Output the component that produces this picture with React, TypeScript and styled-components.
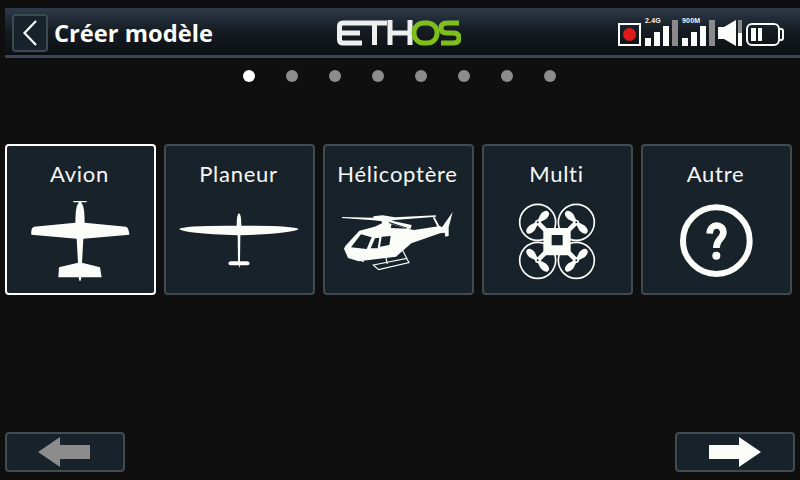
import React from "react";
import styled, { createGlobalStyle } from "styled-components";

const Global = createGlobalStyle`
  html, body { margin: 0; padding: 0; background: #0f0f0f; }
  #root { width: 800px; height: 480px; overflow: hidden; }
  * { box-sizing: border-box; }
`;

const Screen = styled.div`
  width: 800px; height: 480px; display: flex; flex-direction: column;
  background: #0f0f0f; color: #fff; font-family: Lato, "Open Sans", sans-serif;
`;
const Header = styled.header`
  margin: 8px 0 0 5px; height: 50px; display: flex; align-items: center; position: relative;
  padding: 0 16px 0 7px; border-bottom: 3px solid #39455a;
  background: linear-gradient(180deg, #303b4a 0%, #222c38 22%, #141b21 50%, #0c1013 100%);
`;
const BackButton = styled.div`
  width: 36px; height: 38px; margin-top: 3px; flex: none; display: flex; align-items: center; justify-content: center;
  background: #18222a; border: 2px solid #3d4a50; border-radius: 4px;
`;
const Title = styled.div`
  width: 289px; flex: none; padding-left: 6px; margin-top: 3px; font: 700 23.7px "Open Sans", sans-serif; white-space: nowrap; color: #fbfdfb;
`;
const Status = styled.div`
  margin-left: auto; display: flex; align-items: flex-end; height: 26px; margin-top: 2px;
`;
const RecBox = styled.div`
  width: 23px; height: 23px; border: 2px solid #fff; display: flex; align-items: center; justify-content: center;
  &::after { content: ""; width: 13px; height: 13px; border-radius: 50%; background: #e01a1a; }
`;
const Signal = styled.div`
  position: relative; width: 33px; height: 26px; margin-left: 4px; display: flex; align-items: flex-end; gap: 3px;
`;
const SignalLabel = styled.span`
  position: absolute; left: 0; top: -3px; font: 700 7px "Liberation Sans", sans-serif; color: #f4f4f4; letter-spacing: 0.2px;
`;
const Bar = styled.span<{ $h: number; $off?: boolean }>`
  width: 6px; height: ${p => p.$h}px; background: ${p => (p.$off ? "#8a8a8a" : "#fbfdfb")};
`;
const Dots = styled.div`
  display: flex; justify-content: center; gap: 31px; margin-top: 12px; padding-right: 1px;
`;
const Dot = styled.span<{ $on?: boolean }>`
  width: 12px; height: 12px; border-radius: 50%; background: ${p => (p.$on ? "#ffffff" : "#8c8c8c")};
`;
const Cards = styled.div`
  display: flex; gap: 8px; margin-top: 62px; padding-left: 5px;
`;
const Card = styled.div<{ $sel?: boolean }>`
  width: 151px; height: 151px; display: flex; flex-direction: column; align-items: center;
  background: #18222a; border: 2px solid ${p => (p.$sel ? "#ffffff" : "#3f4b4f")}; border-radius: 4px;
`;
const Label = styled.div`
  height: 46px; width: 100%; padding-top: 13px; padding-right: 2px; text-align: center; font-size: 22px; line-height: 30px; letter-spacing: 0.75px; color: #f6f8f6; white-space: nowrap;
`;
const Footer = styled.footer`
  margin-top: auto; padding: 0 5px 8px; display: flex; justify-content: space-between;
`;
const NavButton = styled.div`
  width: 120px; height: 40px; display: flex; align-items: center; justify-content: center;
  background: #18222a; border: 2px solid #3f4b4f; border-radius: 4px;
`;

const W = "#fbfdf9";
const BG = "#18222a";

const IconSvg = ({ x0, children }: { x0: number; children: React.ReactNode }) => (
  <svg width={147} height={99} viewBox={`${x0} 156 441 297`}>{children}</svg>
);

const Plane = () => (
  <IconSvg x0={21}>
    <path fill={W} d="M220 183H260V187H243L245 190Q254 200 254 248L378 260Q386 262 388 284L250 296 246 368 300 382 305 412 244 412 242 422H238L236 412 175 412 177 382 234 368 230 296 94 284Q92 264 102 260L226 248Q226 200 235 190L237 187H220Z" />
  </IconSvg>
);
const Glider = () => (
  <IconSvg x0={18}>
    <path fill={W} d="M237 220Q244 222 244 257Q400 256 416 267Q400 280 241 286L240 364H262Q269 365 269 370 269 376 262 376H240L238 384 236 376H212Q205 376 205 370 205 365 212 364H234L233 286Q70 280 57 267 70 256 230 257 230 222 237 220Z" />
  </IconSvg>
);
const Heli = () => (
  <IconSvg x0={15}>
    <g fill={W}>
      <path d="M66 231L160 233V229L188 226 225 232 348 226V230L225 240 200 245 160 241 66 234Z" />
      <path d="M184 238L206 240 275 255 272 266 262 266 215 252 212 264 262 266 282 270 360 258 366 262 398 216 386 262 386 288 376 290 374 278 360 280 274 310 228 350 116 364 84 354 72 326 76 318 118 272 164 260 186 250Z" />
      <path d="M338 232h6l16 30h-7z" />
    </g>
    <g fill={BG}>
      <path d="M93 322L123 283 155 292 140 327Z" />
      <path d="M152 325L165 295 178 293 173 325Z" />
      <path d="M185 290L212 288 208 315 180 320Z" />
      <path d="M208 246L262 263 260 265 206 249Z" />
    </g>
    <g fill="none" stroke={W} strokeWidth={3.5}>
      <path d="M160 375L260 355 267 368 176 389Z" />
      <path d="M197 350L202 372M245 325L260 355M115 360L132 364" />
    </g>
  </IconSvg>
);

const Blade = ({ x, y, a }: { x: number; y: number; a: number }) => (
  <path fill={W} transform={`translate(${x} ${y}) rotate(${a})`} d="M3-4L24-11Q45-11 45 0 45 11 24 11L3 4Z" />
);
const rotors: { x: number; y: number; a: number }[] = [
  { x: 173, y: 247, a: 135 },
  { x: 289, y: 247, a: 45 },
  { x: 173, y: 361, a: 45 },
  { x: 289, y: 361, a: 135 },
];
const Multi = () => (
  <IconSvg x0={12}>
    <g fill="none" stroke={W} strokeWidth={5}>
      {rotors.map(r => <circle key={`${r.x}-${r.y}`} cx={r.x} cy={r.y} r={54} />)}
    </g>
    <path stroke={W} strokeWidth={14} d="M173 247L200 274M289 247L262 274M173 361L200 334M289 361L262 334" />
    {rotors.map(r => (
      <g key={`b${r.x}-${r.y}`}>
        <Blade x={r.x} y={r.y} a={r.a} />
        <Blade x={r.x} y={r.y} a={r.a + 180} />
        <circle cx={r.x} cy={r.y} r={8} fill={W} />
        <circle cx={r.x} cy={r.y} r={3} fill={BG} />
      </g>
    ))}
    <path fill={W} fillRule="evenodd" d="M190 264H272V346H190ZM215 285V316H248V285Z" />
  </IconSvg>
);
const Question = () => (
  <IconSvg x0={21}>
    <circle cx={241} cy={302} r={100} fill="none" stroke={W} strokeWidth={18} />
    <path fill="none" stroke={W} strokeWidth={20} d="M221 281C222 248 262 250 262 277 262 297 241 296 241 324" />
    <circle cx={241} cy={347} r={12} fill={W} />
  </IconSvg>
);

const items: { name: string; icon: React.ReactNode; sel?: boolean }[] = [
  { name: "Avion", icon: <Plane />, sel: true },
  { name: "Planeur", icon: <Glider /> },
  { name: "Hélicoptère", icon: <Heli /> },
  { name: "Multi", icon: <Multi /> },
  { name: "Autre", icon: <Question /> },
];

const Logo = () => (
  <svg width={124} height={26} viewBox="0 0 124 26" style={{ flex: "none", marginTop: 3 }}>
    <g fill="none" stroke="#eef0f0" strokeWidth={5}>
      <path d="M25 3H6Q2.500 3 2.500 6.500V19.500Q2.500 23 6 23H25M3 13H23" />
      <path d="M25 3H50M37.500 3V25" />
      <path d="M53 0V25M73 0V25M53 13H73" />
    </g>
    <g fill="none" stroke="#7ebf1c" strokeWidth={5}>
      <rect x={77} y={3} width={23} height={20} rx={9.500} />
      <path d="M122 3H110Q104 3 104 8 104 13 110 13H116Q122 13 122 18 122 23 116 23H104" />
    </g>
  </svg>
);

const Speaker = () => (
  <svg width={25} height={26} viewBox="0 0 25 26" style={{ marginLeft: 3 }}>
    <path fill={W} d="M0 7H6L18 0V26L6 19H0Z" />
    <rect x={20} y={0} width={4} height={13} fill="#8a8a8a" />
    <rect x={20} y={13} width={4} height={13} fill={W} />
  </svg>
);
const Battery = () => (
  <svg width={38} height={23} viewBox="0 0 38 23" style={{ marginLeft: 3 }}>
    <rect x={1} y={1} width={32} height={21} rx={5} fill="none" stroke={W} strokeWidth={2} />
    <path fill="none" stroke={W} strokeWidth={2} d="M33 6H35Q37 6 37 8V15Q37 17 35 17H33" />
    <rect x={5} y={5} width={5} height={13} fill={W} />
    <rect x={12} y={5} width={4} height={13} fill={W} />
  </svg>
);

export default function App() {
  return (
    <Screen>
      <Global />
      <Header>
        <BackButton>
          <svg width={17} height={28} viewBox="0 0 17 28">
            <path d="M14 2L2.500 14 14 26" fill="none" stroke="#fbfdfb" strokeWidth={2.200} />
          </svg>
        </BackButton>
        <Title>Créer modèle</Title>
        <Logo />
        <Status>
          <RecBox />
          <Signal>
            <SignalLabel>2.4G</SignalLabel>
            <Bar $h={8} /><Bar $h={14} /><Bar $h={20} /><Bar $h={26} $off />
          </Signal>
          <Signal>
            <SignalLabel>900M</SignalLabel>
            <Bar $h={8} /><Bar $h={14} /><Bar $h={20} /><Bar $h={26} $off />
          </Signal>
          <Speaker />
          <Battery />
        </Status>
      </Header>
      <Dots>
        {Array.from({ length: 8 }, (_, i) => <Dot key={i} $on={i === 0} />)}
      </Dots>
      <Cards>
        {items.map(it => (
          <Card key={it.name} $sel={it.sel}>
            <Label>{it.name}</Label>
            {it.icon}
          </Card>
        ))}
      </Cards>
      <Footer>
        <NavButton>
          <svg width={52} height={30} viewBox="0 0 52 30" style={{ marginLeft: -2 }}>
            <path fill="#8c8c8c" d="M0 15L22 0V8H52V22H22V30Z" />
          </svg>
        </NavButton>
        <NavButton>
          <svg width={52} height={30} viewBox="0 0 52 30">
            <path fill={W} d="M52 15L30 0V8H0V22H30V30Z" />
          </svg>
        </NavButton>
      </Footer>
    </Screen>
  );
}
